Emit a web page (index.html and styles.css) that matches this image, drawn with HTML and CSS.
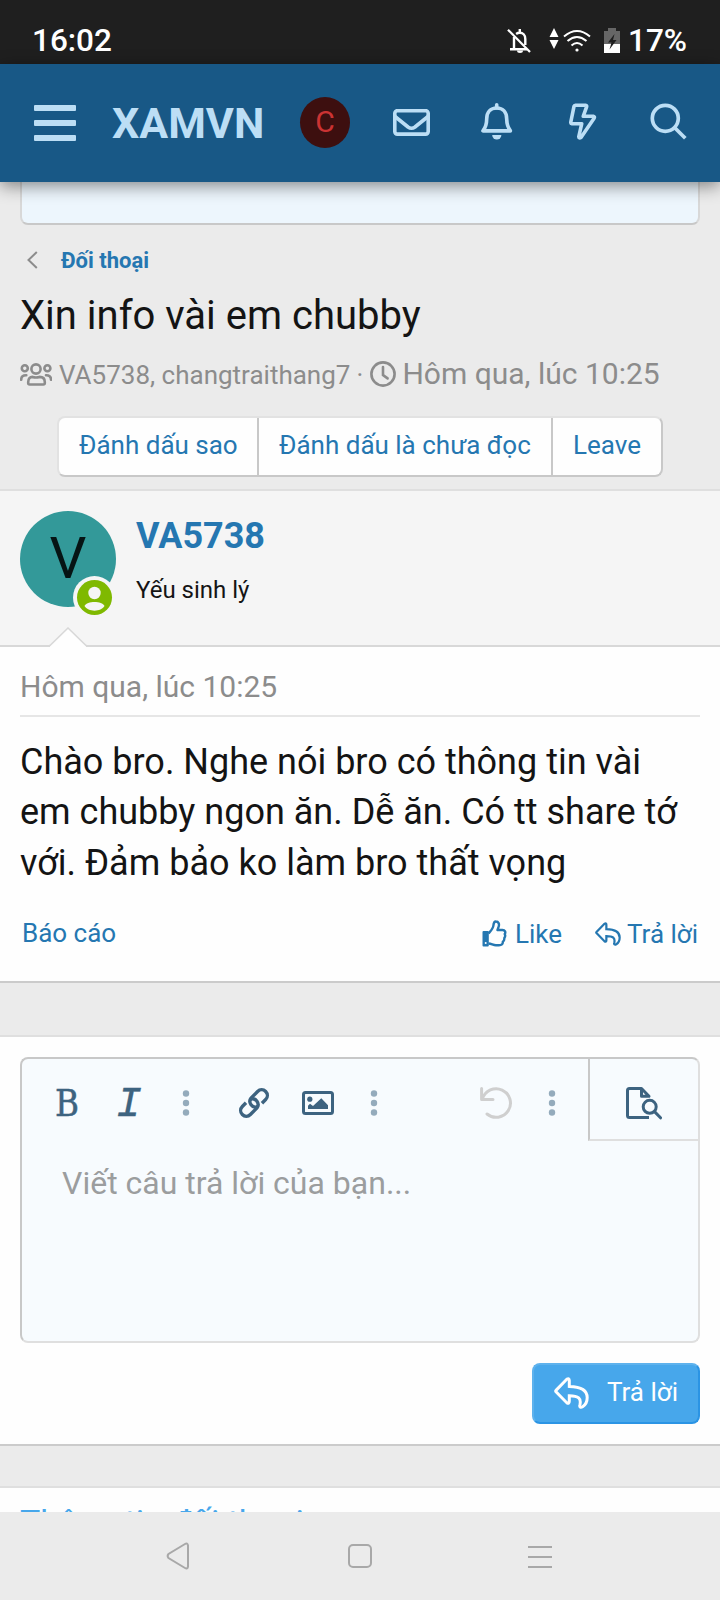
FILE: index.html
```html
<!DOCTYPE html>
<html lang="vi">
<head>
<meta charset="utf-8">
<title>Xin info vài em chubby</title>
<link rel="stylesheet" href="styles.css">
</head>
<body>
<svg class="defs" width="0" height="0">
  <symbol id="reply" viewBox="0 0 35 32"><path d="M2 13.4 12.7 2.3Q15.3.5 15.3 3.6V9.4C27 9.6 33.2 13 33.2 20.6C33.2 25 31.5 28 28.6 29.8C26.5 31 25.3 29.8 25.9 27.9C27.5 21.5 24.5 18.8 15.3 18.8V24.3Q15.3 27.4 12.7 25.7L2 14.8Q1.3 14 2 13.4Z"/></symbol>
  <symbol id="dots" viewBox="0 0 8 26"><circle cx="4" cy="3.5" r="3.2"/><circle cx="4" cy="13" r="3.2"/><circle cx="4" cy="22.5" r="3.2"/></symbol>
</svg>
<div class="screen">
  <div class="status">
    <span class="time">16:02</span>
    <svg class="st-bell" width="24" height="26" viewBox="0 0 24 26"><path d="M7 9v12M3 21.2h17M18.3 17v-6c0-4-2.500-6.200-5.500-6.200c-1.600 0-2.700.4-3.700 1.100M12.800 5V1" fill="none" stroke="#fff" stroke-width="2.400"/><path d="M10 22.500h6a3 2.500 0 0 1-6 0z" fill="#fff"/><path d="M1 1.800 23 24" stroke="#fff" stroke-width="2.200"/></svg>
    <svg class="st-data" width="10" height="22" viewBox="0 0 10 22"><path d="M5 0 9.500 9H.5zM5 21 .5 12h9z" fill="#fff"/></svg>
    <svg class="st-wifi" width="28" height="24" viewBox="0 0 28 24"><g fill="none" stroke="#fff" stroke-width="2"><path d="M1 7.500Q14-3.500 27 7.500M4.500 12Q14 4 23.500 12M8.500 16.500Q14 11.500 19.500 16.500"/></g><circle cx="14" cy="21" r="1.600" fill="#fff"/></svg>
    <svg class="st-bat" width="16" height="25" viewBox="0 0 16 25"><path d="M0 3h4V0h8v3h4v13H0z" fill="#666"/><path d="M0 16h16v9H0z" fill="#fff"/><path d="M10.500 6 4 14.500h3.500L5.500 21.500 12.500 12H9z" fill="#1f1f1f"/></svg>
    <span class="pct">17%</span>
  </div>
  <header class="header">
    <div class="burger"><i></i><i></i><i></i></div>
    <div class="logo">XAMVN</div>
    <div class="me">C</div>
    <svg class="i-mail" width="37" height="27" viewBox="0 0 37 27"><rect x="1.800" y="1.700" width="33.400" height="23.400" rx="2.500"/><path d="M2 7.500 15 18Q18.500 20.500 22 18L35 7.500"/></svg>
    <svg class="i-bell" width="32" height="37" viewBox="0 0 32 37"><path d="M15.700 5C9.500 5 5.700 9.500 5.700 16C5.700 22 4.500 24.500 2 27.900H29.400C27 24.500 25.700 22 25.700 16C25.700 9.500 22 5 15.700 5Z"/><path d="M15.700 5V1.800" stroke-linecap="round"/><path class="fill" d="M11.200 32h9.200a4.600 4.600 0 0 1-9.200 0z"/></svg>
    <svg class="i-bolt" width="28" height="37" viewBox="0 0 28 37"><path d="M6.500 2.200H16.600Q18 2.400 17.600 3.800L14.300 13.200H24.300Q26 13.600 25.100 15.200L12 34.500Q10 35.700 9.800 33.700L12.700 20.800H3Q1.600 20.500 1.800 19L5 3.300Q5.300 2.300 6.500 2.200Z"/></svg>
    <svg class="i-search" width="37" height="37" viewBox="0 0 37 37"><circle cx="15.300" cy="15.300" r="13"/><path d="M25 25 35.300 35.300"/></svg>
  </header>
  <main class="page">
    <div class="notice"></div>
    <nav class="crumb">
      <svg width="11" height="18" viewBox="0 0 11 18"><path d="M9.800 1 1.500 9l8.300 8" fill="none" stroke="#8c8c8c" stroke-width="2"/></svg>
      <a>Đối thoại</a>
    </nav>
    <h1 class="title">Xin info vài em chubby</h1>
    <div class="meta">
      <svg class="i-users" width="32" height="24" viewBox="0 0 32 24"><circle cx="16" cy="6" r="4.600"/><circle cx="4.800" cy="5.200" r="3"/><circle cx="27.400" cy="5.200" r="3"/><path d="M8.200 20V19C8.200 15.500 10 13.900 12.500 13.900Q16 15 19.500 13.900C22.500 13.900 24.800 15.500 24.800 19V20Q24.800 21.500 23.300 21.500H9.700Q8.200 21.500 8.200 20Z"/><path d="M1.200 16.800C1.200 13.500 3 12.200 6.300 12.300M31 16.800C31 13.500 29 12.200 26 12.300" stroke-linecap="round"/></svg>
      <span class="who">VA5738, changtraithang7</span><span class="sep">·</span>
      <svg class="i-clock" width="26" height="26" viewBox="0 0 26 26"><circle cx="13" cy="13" r="11.600"/><path d="M13 6v8l4.600 3.400" stroke-linecap="round"/></svg>
      <span class="when">Hôm qua, lúc 10:25</span>
    </div>
    <div class="tools"><a class="b1">Đánh dấu sao</a><a class="b2">Đánh dấu là chưa đọc</a><a class="b3">Leave</a></div>
    <section class="user">
      <div class="avatar">V
        <svg class="online" width="43" height="43" viewBox="0 0 43 43"><circle cx="21.500" cy="21.500" r="21.500" fill="#f5f5f5"/><circle cx="21.500" cy="21.500" r="17.500" fill="#7fb900"/><circle cx="21.500" cy="17" r="6.200" fill="#f5f5f5"/><path d="M11.500 30C14 24.800 29 24.800 31.500 30C28 36.200 15 36.200 11.500 30Z" fill="#f5f5f5"/></svg>
      </div>
      <div class="names"><a class="name">VA5738</a><span class="rank">Yếu sinh lý</span></div>
      <svg class="notch" width="38" height="20" viewBox="0 0 38 20"><path d="M1 19 19 1 37 19V20H1z" fill="#fefefe"/><path d="M0 18.500H1L19 1 37 18.500h1" fill="none" stroke="#d8d8d8" stroke-width="1.500"/></svg>
    </section>
    <article class="post">
      <div class="date">Hôm qua, lúc 10:25</div>
      <p class="text">Chào bro. Nghe nói bro có thông tin vài em chubby ngon ăn. Dễ ăn. Có tt share tớ với. Đảm bảo ko làm bro thất vọng</p>
      <div class="actions">
        <a class="report">Báo cáo</a>
        <a class="like"><svg width="25" height="27" viewBox="0 0 25 27"><path fill-rule="evenodd" d="M1.500 11h4.300q1 0 1 1v13.500q0 1-1 1H1.500q-1 0-1-1V12q0-1 1-1zM3.700 22a1 1 0 1 0 0 2 1 1 0 0 0 0-2z" fill="#2577b1"/><path d="M6.500 13.500C9.500 10 11.200 8.500 11.400 5.500C11.600 3 12.500 1.400 14 1.500C16.500 1.600 17.500 4 16.700 6.500L15.500 10H20.500C23 10 24 12.300 22.700 14C23.500 15.500 23.200 17 22.300 18C22.500 19.700 22 21 20.800 21.800C21 24.200 19.500 25.300 17 25.300H14C11 25.300 9.500 23.500 6.500 23.500" fill="none" stroke="#2577b1" stroke-width="2.400" stroke-linejoin="round"/></svg>Like</a>
        <a class="answer"><svg width="26" height="24" viewBox="0 0 35 32"><use href="#reply"/></svg>Trả lời</a>
      </div>
    </article>
    <section class="reply">
      <div class="editor">
        <div class="toolbar">
          <span class="bold">B</span><span class="ital">I</span>
          <svg class="d1" width="8" height="26"><use href="#dots"/></svg>
          <svg class="i-link" width="32" height="32" viewBox="0 0 32 32"><g transform="rotate(-45 16 16)"><path id="half" d="M21.500 21.800H26.700A5.700 5.700 0 0 0 26.700 10.400H18A5.700 5.700 0 0 0 16.200 21.400"/><use href="#half" transform="rotate(180 16 16)"/></g></svg>
          <svg class="i-image" width="32" height="24" viewBox="0 0 32 24"><rect x="1.500" y="1.500" width="29" height="21" rx="2"/><circle class="solid" cx="7.800" cy="8.200" r="2.600"/><path class="solid" d="M6 18v-3.300l2-2 3 2.300 8.300-7.700 6.700 7V18z"/></svg>
          <svg class="d2" width="8" height="26"><use href="#dots"/></svg>
          <svg class="i-undo" width="33" height="33" viewBox="0 0 33 33"><path d="M1.600 1.500V12.500H13M2.500 11.800A14.300 14.300 0 1 1 7 27" stroke-linecap="round"/></svg>
          <svg class="d3" width="8" height="26"><use href="#dots"/></svg>
          <div class="preview"><svg width="36" height="33" viewBox="0 0 36 33"><path d="M23 30.400H3.500Q1.500 30.400 1.500 28.400V3.500Q1.500 1.500 3.500 1.500H15.500L23 9.300H15.500V1.500"/><circle cx="23.700" cy="19.800" r="6.500"/><path d="M28.500 24.600 34.500 30.800" stroke-linecap="round"/></svg></div>
        </div>
        <div class="placeholder">Viết câu trả lời của bạn...</div>
      </div>
      <div class="submit"><svg width="35" height="32" viewBox="0 0 35 32"><use href="#reply"/></svg>Trả lời</div>
    </section>
    <section class="info">Thông tin đối thoại</section>
  </main>
  <footer class="nav">
    <svg width="24" height="28" viewBox="0 0 24 28"><path d="M22 3.500V24.500Q21.500 27.500 19 26L2.500 16Q.8 14 2.500 12L19 2Q21.500.6 22 3.500Z"/></svg>
    <svg class="home" width="24" height="24" viewBox="0 0 24 24"><rect x="1" y="1" width="22" height="22" rx="4"/></svg>
    <svg width="24" height="24" viewBox="0 0 24 24"><path d="M0 3h24M0 13h24M0 23h24"/></svg>
  </footer>
</div>
</body>
</html>
```
FILE: styles.css
```css
* { box-sizing: border-box; }
body { margin: 0; font-family: Roboto, sans-serif; background: #ebebeb; color: #141414; }
svg { display: block; flex: none; fill: none; }
.defs { position: absolute; }
.screen { width: 720px; height: 1600px; overflow: hidden; display: flex; flex-direction: column; }

.status { height: 64px; flex: none; background: #1f1f1f; color: #fff; display: flex; align-items: flex-start; padding: 28px 0 0 32px; font-size: 31.5px; font-weight: 500; line-height: 26px; }
.time { width: 475px; }
.st-data { margin-left: 18px; }
.st-wifi { margin: 1px 0 0 4px; }
.st-bat { margin-left: 13px; }
.pct { margin-left: 8px; }

.header { height: 118px; flex: none; background: #185886; display: flex; align-items: center; padding-left: 34px; position: relative; box-shadow: 0 4px 16px rgba(0,0,0,.45); z-index: 2; }
.header svg { stroke: #bcdef5; stroke-width: 3.6; stroke-linejoin: round; }
.header .fill { fill: #bcdef5; stroke: none; }
.burger { width: 42px; display: flex; flex-direction: column; gap: 9px; }
.burger i { height: 6px; background: #bcdef5; border-radius: 1px; }
.logo { width: 188px; margin-right: 36px; padding-left: 36px; font-size: 43px; font-weight: 700; line-height: 50px; color: #bcdef5; }
.me { width: 50px; height: 51px; margin-top: -1px; border-radius: 50%; background: #3d0f0f; color: #cc3333; font-size: 30px; line-height: 50px; text-align: center; }
.i-mail { margin-left: 43px; margin-top: -2px; }
.i-bell { margin-left: 51px; margin-top: -3px; }
.i-bolt { margin-left: 56px; margin-top: -3px; }
.header .i-search { margin-left: 53px; margin-top: -3px; stroke-width: 3.7; }

.page { height: 1330px; flex: none; overflow: hidden; }
.notice { margin: -10px 20px 0; height: 53px; background: #edf6fd; border: 2px solid #d8d8d8; border-bottom-color: #c8c8c8; border-radius: 8px; }
.crumb { height: 60px; display: flex; align-items: center; padding: 11px 0 0 27px; font-size: 22px; font-weight: 700; line-height: 26px; color: #2577b1; }
.crumb a { margin-left: 23px; }
.crumb svg { margin-top: -1px; }
.title { margin: 0; padding: 6px 0 0 20px; height: 66px; font-size: 40px; font-weight: 400; line-height: 50px; }
.meta { height: 65px; padding-left: 20px; display: flex; align-items: flex-start; color: #8c8c8c; line-height: 40px; }
.meta svg { stroke: #8c8c8c; stroke-width: 2.6; }
.i-users { margin-top: 12px; }
.who { font-size: 26px; margin-left: 7px; padding-top: 4px; }
.sep { font-size: 26px; margin-left: 6px; padding-top: 4px; width: 14px; }
.i-clock { margin-top: 10px; }
.when { font-size: 30px; margin-left: 6px; padding-top: 3px; white-space: nowrap; }
.tools { display: flex; width: 606px; height: 61px; margin-left: 57px; background: #fefefe; border: 2px solid #e2e2e2; border-right-color: #c8c8c8; border-bottom-color: #c8c8c8; border-radius: 8px; font-size: 26px; line-height: 54px; color: #2577b1; }
.tools a { padding-left: 20px; border-right: 2px solid #c8c8c8; white-space: nowrap; }
.b1 { width: 200px; }
.b2 { width: 294px; }
.tools .b3 { border: 0; }

.user { margin-top: 12px; height: 158px; background: #f5f5f5; border-top: 2px solid #dfdfdf; border-bottom: 2px solid #d8d8d8; padding: 20px 0 0 20px; display: flex; position: relative; }
.avatar { width: 96px; height: 96px; border-radius: 50%; background: #339999; color: #061414; font-size: 58px; line-height: 94px; text-align: center; position: relative; }
.online { position: absolute; left: 53px; top: 65px; }
.names { margin-left: 20px; display: flex; flex-direction: column; }
.name { font-size: 36px; font-weight: 700; line-height: 50px; color: #2577b1; }
.rank { font-size: 24px; line-height: 28px; margin-top: 15px; }
.notch { position: absolute; left: 49px; bottom: -2px; }

.post { height: 336px; background: #fefefe; border-bottom: 2px solid #cbcbcb; padding: 0 20px; }
.date { height: 70px; padding-top: 20px; border-bottom: 2px solid #e6e6e6; font-size: 30px; line-height: 40px; color: #8c8c8c; }
.text { margin: 20px 0 0; font-size: 36px; line-height: 50.4px; }
.actions { display: flex; margin-top: 26px; padding-left: 2px; font-size: 26px; line-height: 40px; color: #2577b1; }
.actions a { display: flex; align-items: center; white-space: nowrap; }
.actions .report { width: 460px; margin-top: -3px; }
.like svg { margin-right: 8px; margin-top: -2px; }
.answer { margin-left: 33px; }
.answer svg { margin-right: 6px; stroke: #2577b1; stroke-width: 3; }

.reply { margin-top: 52px; height: 411px; border-top: 2px solid #dfdfdf; border-bottom: 2px solid #cbcbcb; background: #fefefe; padding: 20px 20px 0; }
.editor { height: 286px; background: #f7fbfe; border: 2px solid #c8c8c8; border-right-color: #dfdfdf; border-bottom-color: #dfdfdf; border-radius: 8px; }
.toolbar { height: 82px; display: flex; align-items: flex-start; color: #3d6380; }
.toolbar svg { stroke: #3d6380; stroke-width: 3; margin-top: 28px; stroke-linejoin: round; }
.bold, .ital { width: 26px; flex: none; line-height: 44px; }
.bold { margin-left: 33px; margin-top: 22px; font-family: "DejaVu Serif", serif; font-size: 38px; transform: scaleX(.86); transform-origin: 0 50%; -webkit-text-stroke: .5px #3d6380; }
.ital { margin-left: 35px; margin-top: 24px; font-family: "Liberation Mono", monospace; font-size: 43px; font-style: italic; -webkit-text-stroke: .3px #3d6380; }
.toolbar .d1, .toolbar .d2, .toolbar .d3 { fill: #94abbc; stroke: none; margin-top: 31px; }
.d1 { margin-left: 40px; }
.toolbar .i-link { margin-left: 48px; stroke-width: 3.4; }
.toolbar .i-image { margin-left: 32px; margin-top: 32px; }
.toolbar .solid { fill: #3d6380; stroke: none; }
.d2 { margin-left: 36px; }
.toolbar .i-undo { margin-left: 102px; stroke: #cfcfcf; }
.d3 { margin-left: 35px; }
.preview { width: 110px; margin-left: 32px; height: 82px; border-left: 2px solid #c8c8c8; border-bottom: 2px solid #dfdfdf; padding-left: 36px; }
.placeholder { padding: 22px 0 0 40px; font-size: 32px; line-height: 40px; color: #9b9d9e; }
.submit { margin: 20px 0 0 512px; width: 168px; height: 61px; background: #47a7eb; border: 2px solid #5eb2ed; border-right-color: #2b94e4; border-bottom-color: #2b94e4; border-radius: 8px; display: flex; align-items: flex-start; padding: 11px 0 0 20px; color: #fefefe; font-size: 26px; line-height: 32px; }
.submit svg { stroke: #fefefe; stroke-width: 3; margin: 1px 18px 0 0; }
.info { margin-top: 40px; height: 60px; background: #fefefe; border-top: 2px solid #dfdfdf; padding: 12px 20px 0; font-size: 34px; line-height: 44px; color: #47a7eb; }

.nav { height: 88px; flex: none; background: #ebebeb; display: flex; align-items: center; padding: 0 168px 0 166px; justify-content: space-between; position: relative; }
.nav svg { stroke: #a8a8a8; stroke-width: 2; }
.nav .home { margin-left: 2px; }
```
